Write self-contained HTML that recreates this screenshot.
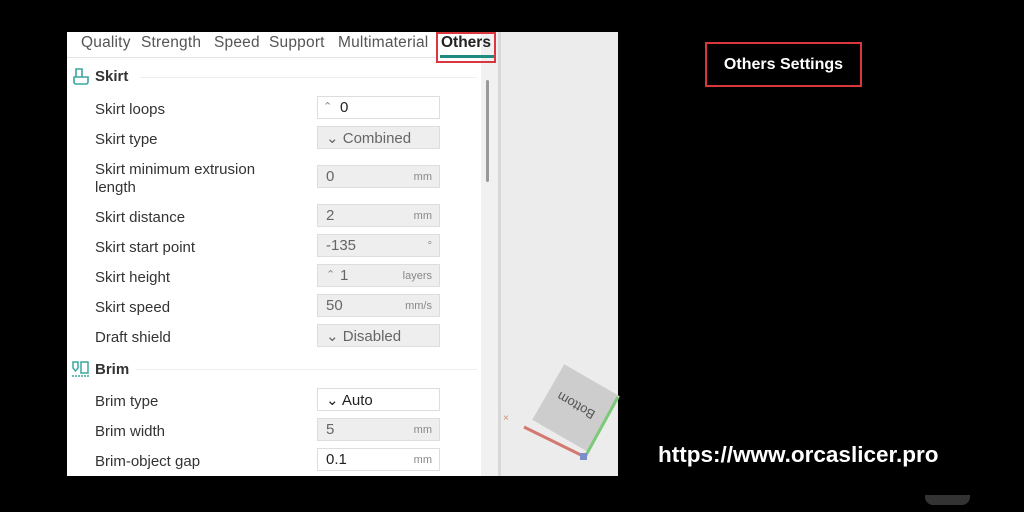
<!DOCTYPE html>
<html><head><style>
body{margin:0;width:1024px;height:512px;background:#000;position:relative;overflow:hidden;font-family:"Liberation Sans","DejaVu Sans",sans-serif}
.a{position:absolute}
.panel{left:67px;top:32px;width:414px;height:444px;background:#fff}
.t{position:absolute;top:34px;font-size:15.5px;color:#555;white-space:nowrap;letter-spacing:0.2px}
.lbl{position:absolute;left:95px;font-size:15px;color:#333}
.f{position:absolute;left:317px;height:23px;border:1px solid #ddd;background:#eee;font-size:15px;color:#666;box-sizing:border-box;width:123px}
.f.w{background:#fff;color:#222;border-color:#ddd}
.f span{position:absolute;left:8px;top:2px}
.f i{position:absolute;right:7px;top:5px;font-style:normal;font-size:11px;color:#888}
.h{position:absolute;left:95px;font-size:15px;font-weight:bold;color:#333}
</style></head><body>
<div class="a panel"></div>
<div class="a" style="left:481px;top:32px;width:17px;height:444px;background:#f1f1f1"></div>
<div class="a" style="left:486px;top:80px;width:3px;height:102px;background:#999;border-radius:2px"></div>
<div class="a" style="left:498px;top:32px;width:3px;height:444px;background:#d8d8d8"></div>
<div class="a" style="left:501px;top:32px;width:117px;height:444px;background:#ececec"></div>
<div class="t" style="left:81px">Quality</div>
<div class="t" style="left:141px">Strength</div>
<div class="t" style="left:214px">Speed</div>
<div class="t" style="left:269px">Support</div>
<div class="t" style="left:338px">Multimaterial</div>
<div class="t" style="left:441px;font-weight:bold;color:#222;letter-spacing:0">Others</div>
<div class="a" style="left:67px;top:57px;width:370px;height:1px;background:#e4e4e4"></div>
<div class="a" style="left:440px;top:55px;width:54px;height:3px;background:#1f8a7f"></div>
<div class="a" style="left:436px;top:32px;width:60px;height:31px;border:2px solid #d9363e;box-sizing:border-box"></div>

<svg class="a" style="left:70px;top:67px" width="22" height="20" viewBox="0 0 22 20"><path d="M6 2h6v8h-6z M4 10h14v5a2 2 0 0 1-2 2H6a2 2 0 0 1-2-2z" fill="none" stroke="#3aa7a0" stroke-width="1.6"/></svg>
<div class="h" style="top:68px">Skirt</div>
<div class="a" style="left:140px;top:77px;width:337px;height:1px;background:#eee"></div>

<div class="lbl" style="top:101px">Skirt loops</div><div class="f w" style="top:96px"><span style="left:5px;font-size:11px;color:#888;top:3px">⌃</span><span style="left:22px">0</span></div>
<div class="lbl" style="top:131px">Skirt type</div><div class="f" style="top:126px"><span>⌄ Combined</span></div>
<div class="lbl" style="top:161px;line-height:18px">Skirt minimum extrusion<br>length</div><div class="f" style="top:165px"><span>0</span><i>mm</i></div>
<div class="lbl" style="top:209px">Skirt distance</div><div class="f" style="top:204px"><span>2</span><i>mm</i></div>
<div class="lbl" style="top:239px">Skirt start point</div><div class="f" style="top:234px"><span>-135</span><i>°</i></div>
<div class="lbl" style="top:269px">Skirt height</div><div class="f" style="top:264px"><span style="font-size:11px;color:#888;top:3px">⌃</span><span style="left:22px">1</span><i>layers</i></div>
<div class="lbl" style="top:299px">Skirt speed</div><div class="f" style="top:294px"><span>50</span><i>mm/s</i></div>
<div class="lbl" style="top:329px">Draft shield</div><div class="f" style="top:324px"><span>⌄ Disabled</span></div>

<svg class="a" style="left:70px;top:360px" width="22" height="20" viewBox="0 0 22 20"><path d="M3 2h5v6l-2.5 3-2.5-3z M11 2h7v11h-7z" fill="none" stroke="#3aa7a0" stroke-width="1.5"/><path d="M2 16h18" stroke="#3aa7a0" stroke-width="1.5" stroke-dasharray="2 1"/></svg>
<div class="h" style="top:361px">Brim</div>
<div class="a" style="left:136px;top:369px;width:341px;height:1px;background:#eee"></div>

<div class="lbl" style="top:393px">Brim type</div><div class="f w" style="top:388px"><span>⌄ Auto</span></div>
<div class="lbl" style="top:423px">Brim width</div><div class="f" style="top:418px"><span>5</span><i>mm</i></div>
<div class="lbl" style="top:453px">Brim-object gap</div><div class="f w" style="top:448px"><span>0.1</span><i>mm</i></div>

<div class="a" style="left:544px;top:376px;width:64px;height:64px;background:#cdcdcd;transform:rotate(30deg)"></div>
<div class="a" style="left:550px;top:398px;width:52px;text-align:center;font-size:13px;color:#555;transform:rotate(-150deg)">Bottom</div>
<svg class="a" style="left:500px;top:385px" width="120" height="80"><path d="M24 42 L85 72" stroke="#d27a70" stroke-width="3"/><path d="M85 72 L118 12" stroke="#7cc97a" stroke-width="3"/><text x="3" y="36" font-size="10" fill="#d28a70">×</text><rect x="80" y="68" width="7" height="7" fill="#7a8fc8"/></svg>

<div class="a" style="left:705px;top:42px;width:157px;height:45px;border:2px solid #d9363e;box-sizing:border-box;color:#fff;font-weight:bold;font-size:16px;text-align:center;line-height:41px">Others Settings</div>
<div class="a" style="left:658px;top:442px;color:#fff;font-weight:bold;font-size:22.5px">https://www.orcaslicer.pro</div>
<div class="a" style="left:925px;top:495px;width:45px;height:10px;background:#333;border-radius:0 0 8px 8px"></div>
</body></html>
